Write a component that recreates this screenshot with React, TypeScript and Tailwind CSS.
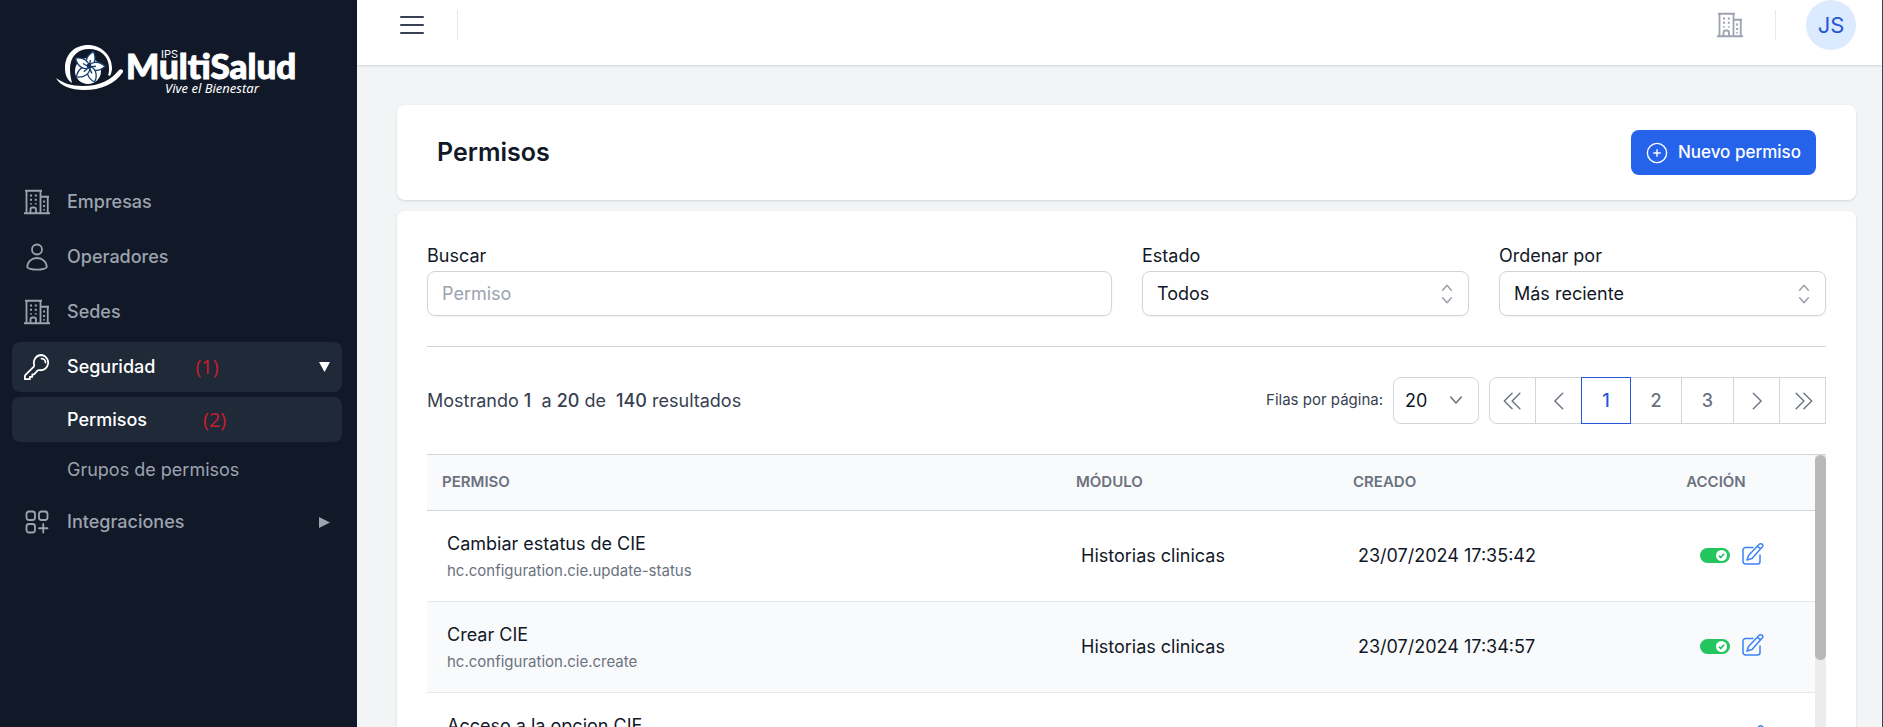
import React from "react";
import type { ReactNode, SVGProps } from "react";

type IconProps = SVGProps<SVGSVGElement>;

function Icon({ children, ...rest }: IconProps) {
  return (
    <svg viewBox="0 0 24 24" fill="none" stroke="currentColor" strokeWidth="1.5" strokeLinecap="round" strokeLinejoin="round" aria-hidden="true" {...rest}>
      {children}
    </svg>
  );
}

function Buildings(props: IconProps) {
  return (
    <svg viewBox="0 0 26 26" fill="none" stroke="currentColor" strokeWidth="1.8" aria-hidden="true" {...props}>
      <path d="M0 24.250h26M1 1.750h17M2.500 1.750v22.500M16.500 1.750v22.500M16.500 7.750H25M23.750 7.750v16.500M6.500 24v-3.500a2 2 0 0 1 2-2h1.500a2 2 0 0 1 2 2V24" />
      <path strokeWidth="2" strokeDasharray="2 2.400" d="M7 5.400v10M11.800 5.400v10M20.100 11.500v10" />
    </svg>
  );
}

function Person(props: IconProps) {
  return (
    <svg viewBox="0 0 26 28" fill="none" stroke="currentColor" strokeWidth="1.8" aria-hidden="true" {...props}>
      <circle cx="13" cy="6.500" r="5" />
      <path strokeLinejoin="round" d="M13 15c5.500 0 9.700 3.800 9.700 9 0 1.300-4.500 2.600-9.700 2.600S3.300 25.300 3.300 24c0-5.200 4.200-9 9.700-9Z" />
    </svg>
  );
}

function Key(props: IconProps) {
  return (
    <svg viewBox="0 0 26 26" fill="none" stroke="currentColor" strokeWidth="1.8" strokeLinejoin="round" strokeLinecap="round" aria-hidden="true" {...props}>
      <path d="M17.500 1a7.600 7.600 0 0 0-7.400 9.600c.2.900.1 1.600-.5 2.200L1.500 20.900c-.4.400-.6.900-.6 1.400v2.900h5v-2.400h2.400v-2.400H10l3.500-3.700c.6-.6 1.200-.7 2-.5A7.600 7.600 0 1 0 17.500 1Z" />
      <path d="M17.500 4.600a4 4 0 0 1 4 4" />
    </svg>
  );
}

function SquaresPlus(props: IconProps) {
  return (
    <svg viewBox="0 0 24 24" fill="none" stroke="currentColor" strokeWidth="1.8" strokeLinecap="round" aria-hidden="true" {...props}>
      <rect x="1.500" y="1.500" width="8.500" height="8.500" rx="2.500" />
      <rect x="14" y="1.500" width="8.500" height="8.500" rx="2.500" />
      <rect x="1.500" y="14" width="8.500" height="8.500" rx="2.500" />
      <path d="M18.250 14v8.500M14 18.250h8.500" />
    </svg>
  );
}

function Emblem() {
  return (
    <svg viewBox="0 0 68 48" className="h-12 w-[68px] shrink-0" aria-hidden="true">
      <path fill="#fff" d="M16 39C10 35 9 29 9 24 9 10 19 1 32 1s24 10 24 23c0 3-1 6-2 8l-2-1c1-2 1-4 1-7C53 12 44 5 33 5S14 12 14 25c0 5 1 10 2 14Z" />
      <path fill="#fff" d="M0 34c7 5 15 8 27 8 17 0 28-6 36-16 2-2 5 0 4 2-8 12-22 18-39 18C15 46 4 42 0 34Z" />
      <circle cx="32" cy="27" r="13" fill="#fff" />
      <g fill="#fff" stroke="#16406f" strokeWidth="1.300" transform="translate(33 23) rotate(12)">
        {[0, 72, 144, 216, 288].map((angle) => (
          <g key={angle} transform={`rotate(${angle})`}>
            <path d="M0 1C-6-3-5-11 1-16 6-10 5-3 0 1Z" />
            <path d="M0 0V-7" strokeWidth="1.400" />
          </g>
        ))}
      </g>
      <circle cx="33" cy="22" r="2.400" fill="#0f2f5c" />
    </svg>
  );
}

function Logo() {
  return (
    <a href="#" aria-label="IPS MultiSalud" className="mx-auto flex h-14 w-[248px] items-start pl-[3px] text-white">
      <Emblem />
      <svg viewBox="0 0 182 56" className="h-14 w-[182px] shrink-0" aria-hidden="true">
        <text x="2" y="35" fontSize="35" fontWeight="900" fontFamily="Lato, sans-serif" fill="#fff" stroke="#fff" strokeWidth="1">MultiSalud</text>
        <text x="37" y="14" fontSize="11" fontFamily="Inter, sans-serif" fill="#fff">IPS</text>
        <text x="41" y="49" fontSize="13" fontStyle="italic" fontFamily="Noto Sans, sans-serif" fill="#fff">Vive el Bienestar</text>
      </svg>
    </a>
  );
}

function NavItem({ icon, label, active, note, marker }: { icon: ReactNode; label: string; active?: boolean; note?: string; marker?: string }) {
  return (
    <a href="#" className={active ? "flex h-[50px] items-center rounded-lg bg-[#1f2937] px-3 text-white" : "flex h-[50px] items-center rounded-lg px-3 text-[#9ca3af]"}>
      <span className="flex w-[26px] justify-center">{icon}</span>
      <span className="ml-[17px] font-medium">{label}</span>
      {note && <Note className="ml-10">{note}</Note>}
      {marker && (
        <svg viewBox="0 0 12 12" className="ml-auto size-[11px] fill-current" aria-hidden="true">
          <path d={marker} />
        </svg>
      )}
    </a>
  );
}

function Note({ className, children }: { className: string; children: ReactNode }) {
  return <span className={`${className} font-['Open_Sans',sans-serif] text-xl text-[#c81e2b]`}>{children}</span>;
}

function Sidebar() {
  return (
    <aside className="w-[357px] shrink-0 bg-[#111827] pt-11 pr-[15px] pl-3">
      <Logo />
      <nav className="mt-[77px] flex flex-col gap-[5px] text-lg">
        <NavItem icon={<Buildings className="size-[26px]" />} label="Empresas" />
        <NavItem icon={<Person className="h-7 w-[26px]" />} label="Operadores" />
        <NavItem icon={<Buildings className="size-[26px]" />} label="Sedes" />
        <NavItem icon={<Key className="size-[26px]" />} label="Seguridad" active note="(1)" marker="M0 0h12L6 11Z" />
        <a href="#" className="flex h-[45px] items-center rounded-lg bg-[#1f2937] pl-[55px] font-medium text-white">
          Permisos
          <Note className="ml-14 font-normal">(2)</Note>
        </a>
        <a href="#" className="flex h-[45px] items-center rounded-lg pl-[55px] text-[#9ca3af]">Grupos de permisos</a>
        <NavItem icon={<SquaresPlus className="size-6" />} label="Integraciones" marker="M0 0v12L12 6Z" />
      </nav>
    </aside>
  );
}

function Header() {
  return (
    <header className="flex h-[65px] shrink-0 items-start bg-white pr-[26px] pl-[43px] shadow-sm">
      <div className="flex h-[50px] flex-1 items-center">
        <button type="button" aria-label="Menú" className="text-[#374151]">
          <svg viewBox="0 0 24 20" className="h-5 w-6" stroke="currentColor" strokeWidth="2" strokeLinecap="round" aria-hidden="true">
            <path d="M1 2h22M1 10h22M1 18h22" />
          </svg>
        </button>
        <span className="ml-[33px] h-[30px] w-px bg-[#e5e7eb]" />
        <button type="button" aria-label="Empresas" className="ml-auto text-[#9ca3af]">
          <Buildings className="size-[26px]" />
        </button>
        <span className="ml-8 h-[30px] w-px bg-[#e5e7eb]" />
        <button type="button" className="ml-[30px] size-[50px] rounded-full bg-[#dbeafe] text-[22px] text-[#2456d8]">JS</button>
      </div>
    </header>
  );
}

function SelectField({ id, label, value }: { id: string; label: string; value: string }) {
  return (
    <div>
      <label htmlFor={id} className="block text-lg leading-[30px] text-[#111827]">{label}</label>
      <div className="relative">
        <select id={id} className="block h-[45px] w-full appearance-none rounded-lg border border-[#d1d5db] bg-white px-[14px] text-lg text-[#111827] shadow-xs">
          <option>{value}</option>
        </select>
        <Icon className="pointer-events-none absolute top-[10px] right-[9px] size-[26px] text-[#9ca3af]">
          <path d="M8 8.500 12 4l4 4.500M8 15.500 12 20l4-4.500" />
        </Icon>
      </div>
    </div>
  );
}

function Filters() {
  return (
    <div className="grid grid-cols-[685fr_327fr_327fr] gap-[30px]">
      <div>
        <label htmlFor="buscar" className="block text-lg leading-[30px] text-[#111827]">Buscar</label>
        <input id="buscar" placeholder="Permiso" className="block h-[45px] w-full rounded-lg border border-[#d1d5db] px-[14px] text-lg shadow-xs placeholder:text-[#9ca3af]" />
      </div>
      <SelectField id="estado" label="Estado" value="Todos" />
      <SelectField id="orden" label="Ordenar por" value="Más reciente" />
    </div>
  );
}

const pageButton = "flex h-[47px] items-center justify-center border border-[#d1d5db] bg-white text-lg font-medium text-[#6b7280]";

function Pagination() {
  return (
    <div className="flex items-center">
      <p className="whitespace-pre text-lg text-[#374151]">
        Mostrando <span className="font-medium">1</span>{"  "}a <span className="font-medium">20</span> de{"  "}
        <span className="font-medium">140</span> resultados
      </p>
      <label htmlFor="filas" className="ml-auto text-[15px] text-[#374151]">Filas por página:</label>
      <div className="relative ml-[10px]">
        <select id="filas" className="block h-[47px] w-[86px] appearance-none rounded-lg border border-[#d1d5db] bg-white pl-[11px] text-lg text-[#111827]">
          <option>20</option>
        </select>
        <Icon className="pointer-events-none absolute top-[14px] right-[14px] size-[18px] text-[#6b7280]" strokeWidth="2">
          <path d="m5 8 7 8 7-8" />
        </Icon>
      </div>
      <nav aria-label="Paginación" className="ml-[10px] flex -space-x-px">
        <button type="button" aria-label="Primera" className={`${pageButton} w-[47px] rounded-l-lg`}>
          <Icon className="size-[22px]"><path d="M11 3.500 2.500 12l8.500 8.500M19.500 3.500 11 12l8.500 8.500" /></Icon>
        </button>
        <button type="button" aria-label="Anterior" className={`${pageButton} w-[47px]`}>
          <Icon className="size-[22px]"><path d="M16 3.500 7.500 12l8.500 8.500" /></Icon>
        </button>
        <button type="button" aria-current="page" className="relative z-10 flex h-[47px] w-[50px] items-center justify-center border border-[#2456d8] bg-white text-lg font-medium text-[#2456d8]">1</button>
        <button type="button" className={`${pageButton} w-[52px]`}>2</button>
        <button type="button" className={`${pageButton} w-[53px]`}>3</button>
        <button type="button" aria-label="Siguiente" className={`${pageButton} w-[47px]`}>
          <Icon className="size-[22px]"><path d="m8 3.500 8.500 8.500L8 20.500" /></Icon>
        </button>
        <button type="button" aria-label="Última" className={`${pageButton} w-[47px]`}>
          <Icon className="size-[22px]"><path d="m13 3.500 8.500 8.500-8.500 8.500M4.500 3.500 13 12l-8.500 8.500" /></Icon>
        </button>
      </nav>
    </div>
  );
}

const rows = [
  { name: "Cambiar estatus de CIE", code: "hc.configuration.cie.update-status", created: "23/07/2024 17:35:42" },
  { name: "Crear CIE", code: "hc.configuration.cie.create", created: "23/07/2024 17:34:57" },
  { name: "Acceso a la opcion CIE", code: "hc.configuration.cie.index", created: "23/07/2024 17:34:12" },
];

function Toggle() {
  return (
    <button type="button" role="switch" aria-checked="true" aria-label="Activo" className="flex h-[15px] w-[30px] items-center justify-end rounded-full bg-[#22c55e] pr-[3px]">
      <svg viewBox="0 0 12 12" className="size-[11px]" aria-hidden="true">
        <circle cx="6" cy="6" r="6" fill="#fff" />
        <path d="m3.300 6.200 1.900 2L8.800 4" fill="none" stroke="#22c55e" strokeWidth="1.8" />
      </svg>
    </button>
  );
}

function PermissionTable() {
  return (
    <div className="flex border-t border-[#d1d5db]">
      <div className="min-w-0 flex-1">
        <table className="w-full table-fixed border-collapse text-left text-[#111827]">
          <colgroup>
            <col />
            <col className="w-[277px]" />
            <col className="w-[279px]" />
            <col className="w-[198px]" />
          </colgroup>
          <thead className="bg-[#f9fafb] text-[15px] text-[#6b7280]">
            <tr className="h-[55px] border-b border-[#d1d5db]">
              <th className="px-[15px] font-semibold">PERMISO</th>
              <th className="px-[15px] font-semibold">MÓDULO</th>
              <th className="px-[15px] font-semibold">CREADO</th>
              <th className="px-[15px] text-center font-semibold">ACCIÓN</th>
            </tr>
          </thead>
          <tbody className="text-lg">
            {rows.map((row) => (
              <tr key={row.code} className="h-[91px] border-b border-[#e5e7eb] even:bg-[#f9fafb]">
                <td className="px-5 pt-0.5">
                  <div className="leading-7">{row.name}</div>
                  <div className="text-[15px] leading-[26px] text-[#6b7280]">{row.code}</div>
                </td>
                <td className="px-5">Historias clinicas</td>
                <td className="px-5">{row.created}</td>
                <td className="pl-8">
                  <div className="flex items-center justify-center gap-3">
                    <Toggle />
                    <button type="button" aria-label="Editar" className="pb-1 text-[#3b82f6]">
                      <Icon viewBox="0 0 22 24" className="h-6 w-[22px]">
                        <path d="M11 5.500H3.500A2.500 2.500 0 0 0 1 8v11.500A2.500 2.500 0 0 0 3.500 22h12a2.500 2.500 0 0 0 2.500-2.500V13" />
                        <path d="M17.200 2.300a2 2 0 0 1 3 2.700L10 16.500 5 18l1.500-4.500ZM15.500 4.200l3 2.700" />
                      </Icon>
                    </button>
                  </div>
                </td>
              </tr>
            ))}
          </tbody>
        </table>
      </div>
      <div className="w-[11px] shrink-0 bg-[#ececec]">
        <div className="h-[205px] rounded-full bg-[#b8b8b8]" />
      </div>
    </div>
  );
}

export default function App() {
  return (
    <div className="flex h-screen overflow-hidden border-r border-[#374151] bg-[#f3f4f6] font-[Inter,sans-serif]">
      <Sidebar />
      <div className="flex min-w-0 flex-1 flex-col">
        <Header />
        <main className="flex flex-col gap-[11px] pt-10 pr-[26px] pl-10">
          <section className="flex h-[95px] shrink-0 items-center justify-between rounded-lg bg-white px-10 shadow-sm">
            <h1 className="text-[25px] font-semibold text-[#111827]">Permisos</h1>
            <button type="button" className="flex h-[45px] items-center gap-[10px] rounded-lg bg-[#2563eb] px-[15px] text-[17px] font-medium text-white">
              <Icon className="size-[22px]"><circle cx="12" cy="12" r="10.500" /><path d="M12 8.500v7M8.500 12h7" /></Icon>
              Nuevo permiso
            </button>
          </section>
          <section className="rounded-lg bg-white px-[30px] pt-[30px] shadow-sm">
            <Filters />
            <hr className="my-[30px] border-[#d1d5db]" />
            <Pagination />
            <div className="pt-[30px]">
              <PermissionTable />
            </div>
          </section>
        </main>
      </div>
    </div>
  );
}
